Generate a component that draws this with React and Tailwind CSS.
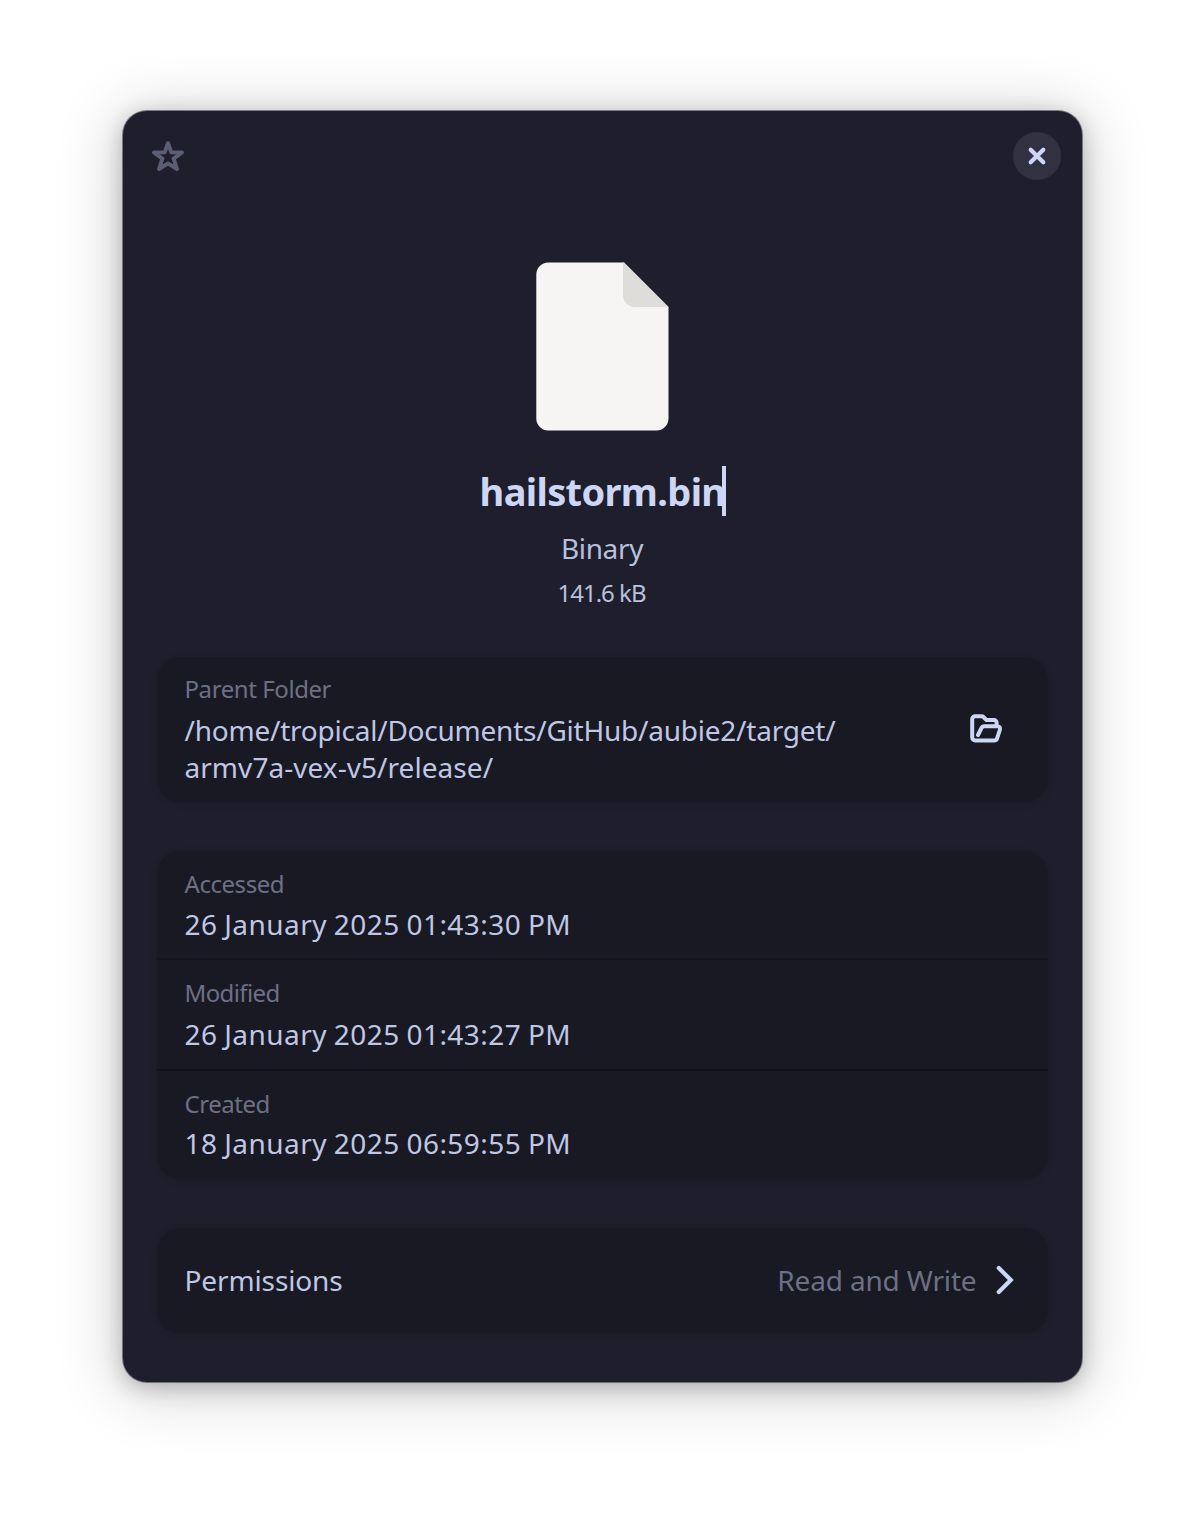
const label = "text-[24px] leading-[32px] text-[#6d7085]";
const value = "text-[28px] leading-[37px] text-[#bfc7e5]";
const card =
  "rounded-[24px] bg-[#191923] shadow-[0_0_0_2px_rgba(0,0,0,0.03),0_2px_6px_2px_rgba(0,0,0,0.05)]";

function StarIcon() {
  return (
    <svg className="mb-0.5 h-8 w-8" viewBox="0 0 32 32" fill="none" stroke="#5b5e75" strokeWidth="3.9" strokeLinejoin="round">
      <path d="M16 3.2 L19.3 12.3 L30 12.5 L21.6 18.6 L25 29 L16 23.4 L7 29 L10.4 18.6 L2 12.5 L12.7 12.3 Z" />
    </svg>
  );
}

function FileIcon() {
  return (
    <svg className="h-[170px] w-[134px]" viewBox="0 0 134 170">
      <path
        d="M12.3 0.5 H88 L132.5 45 V156.5 a12 12 0 0 1 -12 12 H12.3 a12 12 0 0 1 -12 -12 V12.5 a12 12 0 0 1 12 -12 Z"
        fill="#f6f5f4"
      />
      <path d="M88 0.5 L132.5 45 H99 a12 12 0 0 1 -12 -12 V0.5 Z" fill="#deddda" />
    </svg>
  );
}

function FolderIcon() {
  return (
    <svg className="mb-1 h-8 w-8" viewBox="0 0 32 32" fill="none" stroke="#cdd6f4" strokeWidth="4" strokeLinecap="round" strokeLinejoin="round">
      <path d="M26.6 12.5 V10.6 a2.5 2.5 0 0 0 -2.5 -2.5 H16.5 L13.4 5 Q12.6 4.2 11.4 4.2 H5.2 a3 3 0 0 0 -3 3 V25.4 a3 3 0 0 0 3 3 H24.6 a2.4 2.4 0 0 0 2.4 -1.8 L29.8 18 C30.4 15.6 29.4 14.2 27.2 14.2 H14.2 C12.6 14.2 12 15 11.4 16.2 L8 23" />
    </svg>
  );
}

function DateRow({ title, date, className, gap }) {
  return (
    <div className={`pt-[17px] pl-[27.5px] ${className}`}>
      <div className={label}>
        <span className={title === "Modified" ? "tracking-[-0.6px]" : "tracking-[-0.45px]"}>{title}</span>
      </div>
      <div className={`${value} ${gap} tracking-[0.45px] [word-spacing:-0.9px]`}>{date}</div>
    </div>
  );
}

export default function App() {
  return (
    <div className="h-[1516px] w-[1204px] overflow-hidden bg-white pl-[123px] pt-[111px] font-['Noto_Sans',sans-serif]">
      <main className="flex h-[1271px] w-[959px] flex-col rounded-[24px] bg-[#1f1e2d] px-[34px] shadow-[0_0_0_1px_rgba(60,60,72,0.6),0_5px_22px_rgba(0,0,0,0.24),0_6px_60px_8px_rgba(0,0,0,0.17)]">
        <header className="-mr-[12.5px] -ml-[5px] flex h-[91px] items-center justify-between">
          <StarIcon />
          <button className="mb-px flex h-12 w-12 items-center justify-center rounded-full bg-[#313142]" aria-label="Close">
            <svg className="h-5 w-5" viewBox="0 0 20 20" stroke="#cdd6f4" strokeWidth="4.2" strokeLinecap="round">
              <path d="M3.7 3.7 L16.3 16.3 M16.3 3.7 L3.7 16.3" />
            </svg>
          </button>
        </header>

        <section className="flex flex-col items-center pt-[60px]">
          <FileIcon />
          <div className="mt-[33px] flex h-[52px] items-center pl-px">
            <h1 className="text-[38px] leading-[52px] font-bold tracking-[-0.65px] text-[#cdd6f4]">hailstorm.bin</h1>
            <div className="-ml-[3px] h-[50px] w-1 bg-[#cdd6f4]" />
          </div>
          <div className="mt-[13px] pr-px text-[28px] leading-[37px] tracking-[-0.35px] text-[#b9c0de]">Binary</div>
          <div className="mt-[10px] pr-[2px] text-[24px] leading-[32px] tracking-[-1px] text-[#b9c0de]">141.6 kB</div>
        </section>

        <section className={`${card} mt-[48px] flex h-[145px] shrink-0 items-center justify-between pr-[46px] pl-[27.5px]`}>
          <div>
            <div className={`${label} tracking-[-0.42px]`}>Parent Folder</div>
            <div className={`${value} mt-[7px]`}>
              <div className="tracking-[-0.23px]">/home/tropical/Documents/GitHub/aubie2/target/</div>
              <div className="tracking-[0.05px]">armv7a-vex-v5/release/</div>
            </div>
          </div>
          <FolderIcon />
        </section>

        <section className={`${card} mt-[49px] h-[328px] shrink-0`}>
          <DateRow title="Accessed" date="26 January 2025 01:43:30 PM" className="h-[109px] border-b-2 border-[#13131c]" gap="mt-[6px]" />
          <DateRow title="Modified" date="26 January 2025 01:43:27 PM" className="h-[111px] border-b-2 border-[#13131c]" gap="mt-[7px]" />
          <DateRow title="Created" date="18 January 2025 06:59:55 PM" className="h-[108px]" gap="mt-[5px]" />
        </section>

        <section className={`${card} mt-[49px] flex h-[105px] shrink-0 items-center justify-between pr-[33.5px] pb-px pl-[27.5px]`}>
          <div className={`${value} tracking-[-0.12px]`}>Permissions</div>
          <div className="flex items-center gap-[18px]">
            <span className="text-[28px] leading-[37px] tracking-[-0.15px] text-[#6d7085]">Read and Write</span>
            <svg className="h-8 w-5" viewBox="0 0 20 32" fill="none" stroke="#cdd6f4" strokeWidth="4.2" strokeLinecap="round">
              <path d="M3.8 4 L15.8 16 L3.8 28" />
            </svg>
          </div>
        </section>
      </main>
    </div>
  );
}
